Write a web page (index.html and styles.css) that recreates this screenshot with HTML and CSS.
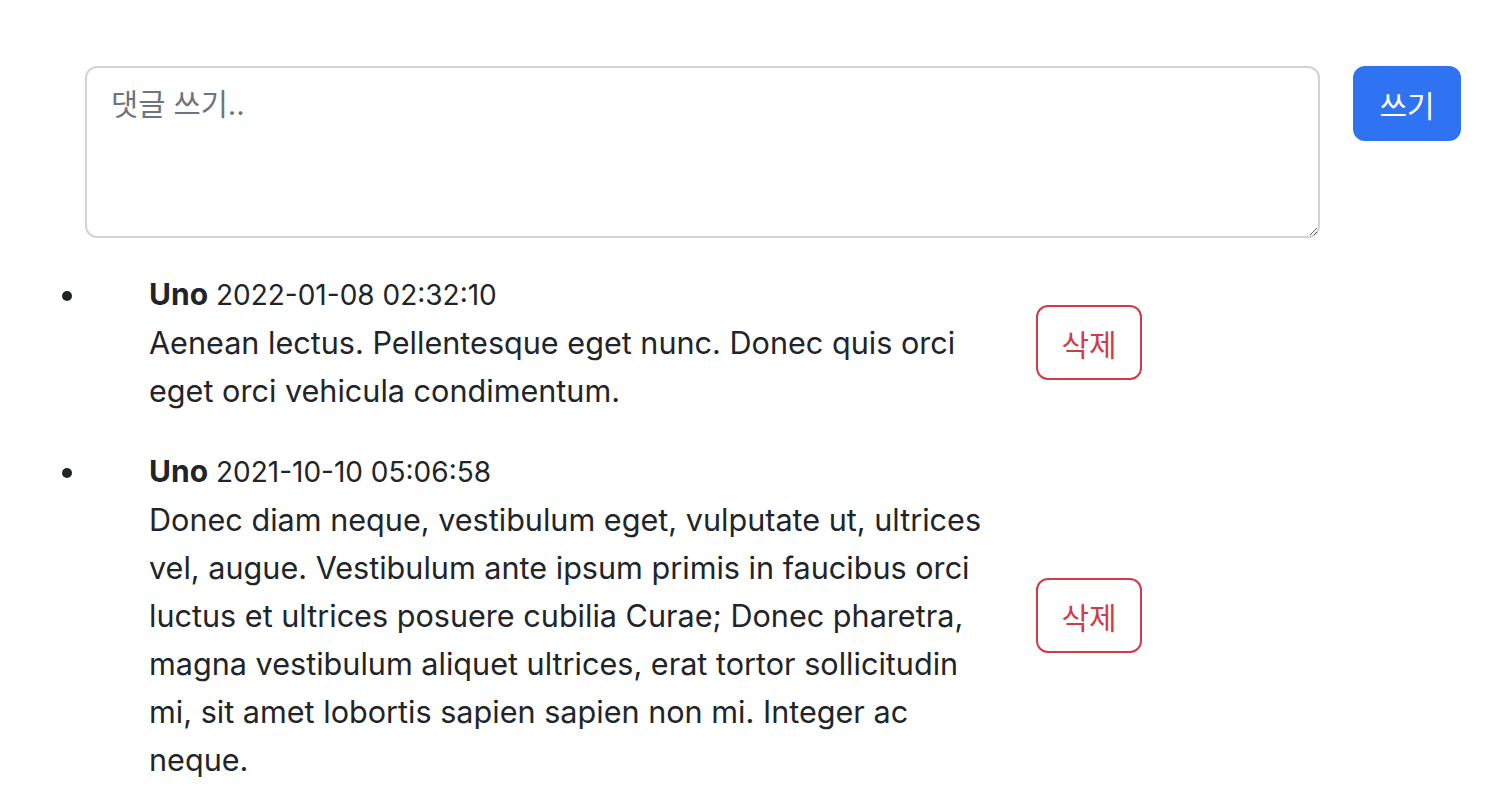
FILE: index.html
```html
<!DOCTYPE html>
<html lang="ko">
<head>
<meta charset="utf-8">
<title>댓글</title>
<link rel="stylesheet" href="styles.css">
</head>
<body>
<div class="page">
  <form class="comment-form">
    <textarea class="comment-input" rows="3" placeholder="댓글 쓰기.."></textarea>
    <button type="button" class="btn btn-primary">쓰기</button>
  </form>
  <ul class="comment-list">
    <li class="comment">
      <div class="comment-row">
        <div class="comment-body">
          <div class="comment-head"><strong class="author">Uno</strong> <span class="date">2022-01-08 02:32:10</span></div>
          <p class="comment-text">Aenean lectus. Pellentesque eget nunc. Donec quis orci eget orci vehicula condimentum.</p>
        </div>
        <div class="comment-actions">
          <button type="button" class="btn btn-outline-danger">삭제</button>
        </div>
      </div>
    </li>
    <li class="comment">
      <div class="comment-row">
        <div class="comment-body">
          <div class="comment-head"><strong class="author">Uno</strong> <span class="date">2021-10-10 05:06:58</span></div>
          <p class="comment-text">Donec diam neque, vestibulum eget, vulputate ut, ultrices vel, augue. Vestibulum ante ipsum primis in faucibus orci luctus et ultrices posuere cubilia Curae; Donec pharetra, magna vestibulum aliquet ultrices, erat tortor sollicitudin mi, sit amet lobortis sapien sapien non mi. Integer ac neque.</p>
        </div>
        <div class="comment-actions">
          <button type="button" class="btn btn-outline-danger">삭제</button>
        </div>
      </div>
    </li>
  </ul>
</div>
</body>
</html>
```

FILE: styles.css
```css
* { box-sizing: border-box; }

html, body {
  margin: 0;
  background: #ffffff;
}

body {
  font-family: Inter, "Noto Sans CJK KR", "Noto Sans", sans-serif;
  font-size: 30.6px;
  line-height: 48px;
  color: #212529;
}

.page {
  padding: 66px 0 0 85px;
}

.comment-form {
  display: flex;
  align-items: flex-start;
  gap: 33px;
  margin: 0 0 32px 0;
}

.comment-input {
  width: 1235px;
  height: 172px;
  padding: 12px 24px;
  border: 2px solid #ced4da;
  border-radius: 12px;
  font-family: Inter, "Noto Sans CJK KR", sans-serif;
  font-size: 29.5px;
  line-height: 48px;
  color: #212529;
  resize: vertical;
  outline: none;
}

.comment-input::placeholder {
  color: #6c757d;
  opacity: 1;
}

.btn {
  font-family: "Noto Sans CJK KR", sans-serif;
  font-size: 30px;
  line-height: 48px;
  padding: 0 24.5px;
  border-radius: 12px;
  border: 2px solid transparent;
  background: transparent;
  cursor: pointer;
  height: 75px;
  display: inline-flex;
  align-items: center;
}

.btn-primary {
  background: #2f73f2;
  border-color: #2f73f2;
  color: #ffffff;
}

.btn-outline-danger {
  padding: 0 23.5px;
  border-color: #cf3c48;
  color: #cf3c48;
  background: #ffffff;
}

.comment-list {
  margin: 0;
  padding: 0 0 0 3px;
  list-style: disc;
}

.comment {
  margin-bottom: 32px;
}

.comment::marker {
  font-size: 30px;
}

.comment-row {
  display: flex;
  align-items: center;
  padding-left: 61px;
}

.comment-body {
  width: 845px;
  flex: none;
}

.comment-head {
  font-size: 28px;
  line-height: 48px;
}

.author {
  font-weight: 700;
  font-size: 30px;
}

.comment-text {
  margin: 0;
}

.comment-actions {
  margin-left: 42px;
}
```
